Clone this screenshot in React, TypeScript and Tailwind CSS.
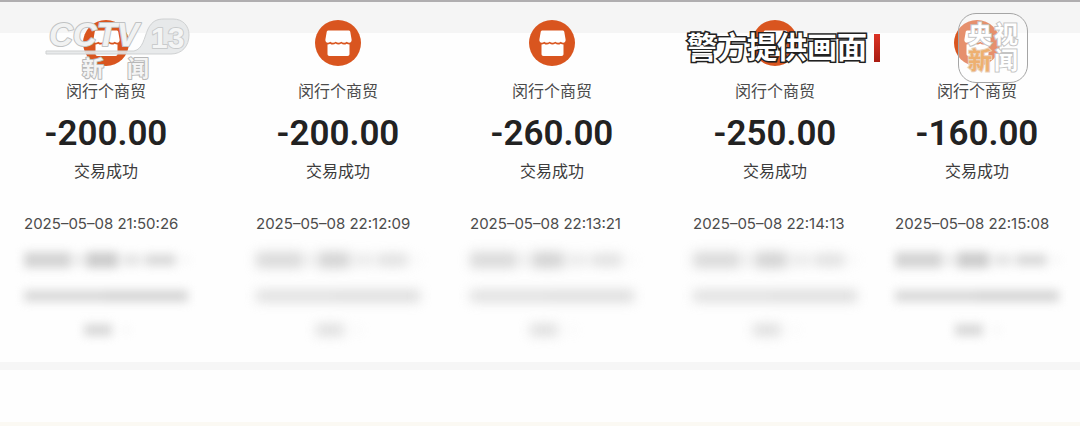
interface Bill {
  merchant: string
  amount: string
  status: string
  time: string
  faded: boolean
}

const bills: Bill[] = [
  { merchant: '闵行个商贸', amount: '-200.00', status: '交易成功', time: '2025–05–08 21:50:26', faded: false },
  { merchant: '闵行个商贸', amount: '-200.00', status: '交易成功', time: '2025–05–08 22:12:09', faded: true },
  { merchant: '闵行个商贸', amount: '-260.00', status: '交易成功', time: '2025–05–08 22:13:21', faded: true },
  { merchant: '闵行个商贸', amount: '-250.00', status: '交易成功', time: '2025–05–08 22:14:13', faded: true },
  { merchant: '闵行个商贸', amount: '-160.00', status: '交易成功', time: '2025–05–08 22:15:08', faded: false },
]

function StoreIcon() {
  return (
    <svg className="size-[46px]" viewBox="0 0 46 46" aria-hidden="true">
      <circle cx="23" cy="23" r="23" fill="#d9551f" />
      <path
        fill="#fff"
        d="M13.500 10.500h20c1 0 1.600.5 1.800 1.500l1.300 7.500c.3 2-.8 3.200-2.300 3.200-1 0-1.800-.3-2.500-.9-.8.600-1.700.9-2.700.9s-2-.3-2.800-1c-.8.700-1.800 1-2.800 1s-2-.3-2.800-1c-.8.700-1.800 1-2.800 1s-1.900-.3-2.700-.9c-.7.600-1.500.9-2.500.9-1.500 0-2.600-1.200-2.300-3.200l1.300-7.500c.2-1 .8-1.500 1.800-1.500z"
      />
      <path
        fill="#fff"
        d="M12.500 24.500c1 0 1.900-.3 2.600-.8.800.6 1.700.9 2.700.9s2-.3 2.800-1c.8.700 1.800 1 2.800 1s2-.3 2.800-1c.8.700 1.800 1 2.800 1s1.900-.3 2.700-.9c.7.500 1.600.8 2.800.8V34c0 1.300-.7 2-2 2h-18c-1.300 0-2-.7-2-2z"
      />
    </svg>
  )
}

// Redacted order details
function HiddenDetails({ faded }: { faded: boolean }) {
  return (
    <div
      className={`mt-4 flex flex-col gap-[22px] self-stretch ${faded ? 'opacity-65 blur-[6px]' : 'opacity-75 blur-[5px]'}`}
      aria-hidden="true"
    >
      <div className="flex h-4 items-center gap-1">
        <span className="h-4 w-12 bg-[#c6c6c6]" />
        <span className="h-3 w-2 bg-[#dddddd]" />
        <span className="h-4 w-8 bg-[#bcbcbc]" />
        <span className="h-3 w-5 bg-[#dddddd]" />
        <span className="h-3 w-8 bg-[#cecece]" />
        <span className="ml-1 size-1 bg-[#dddddd]" />
      </div>
      <div className="flex h-3">
        <span className="h-3 w-20 bg-[#cecece]" />
        <span className="h-3 grow bg-[#c9c9c9]" />
      </div>
      <div className="flex h-3 items-center gap-3 pl-[60px]">
        <span className="h-3 w-7 bg-[#cccccc]" />
        <span className="size-1 bg-[#dddddd]" />
      </div>
    </div>
  )
}

function BillColumn({ bill }: { bill: Bill }) {
  return (
    <article className="flex w-[164px] flex-col items-center">
      <StoreIcon />
      <h2 className="mt-[14px] text-base leading-6 text-[#4a4a4a]">{bill.merchant}</h2>
      <p className="mt-[10px] font-[Roboto] text-[35px] leading-10 font-semibold whitespace-nowrap text-[#222222]">{bill.amount}</p>
      <p className="mt-[6px] text-base leading-6 text-[#3c3c3c]">{bill.status}</p>
      <time className="mt-7 self-start font-[Inter] text-[15px] leading-6 whitespace-nowrap text-[#4c4c4c]">{bill.time}</time>
      <HiddenDetails faded={bill.faded} />
    </article>
  )
}

function ChannelLogo() {
  return (
    <svg
      className="absolute top-4 left-11 h-[66px] w-[150px]"
      viewBox="0 0 150 66"
      role="img"
      aria-label="CCTV 13 新闻"
      strokeLinejoin="round"
    >
      <path
        d="M2 35H90C99 33 100 22 104 13C108 5 113 3 120 3H129C139 3 145 10 145 19C145 30 138 38 127 38H2z"
        fill="#e6e8e9"
        fillOpacity="0.9"
        stroke="#cfd1d2"
      />
      <g fontFamily="'Liberation Sans', sans-serif" fontWeight="700" paintOrder="stroke">
        <text x="5" y="30" fontSize="33" fontStyle="italic" fill="#f1f2f2" stroke="#c0c2c3" strokeWidth="2">
          CCTV
        </text>
        <text x="107" y="32" fontSize="30" fill="#f4f5f5" stroke="#c9cbcc" strokeWidth="2">
          13
        </text>
      </g>
      <g
        fontFamily="'Noto Sans CJK SC', sans-serif"
        fontSize="22"
        fontWeight="700"
        fill="#f4f4f4"
        stroke="#b7b7b7"
        strokeWidth="2"
        paintOrder="stroke"
      >
        <text x="38" y="60">新</text>
        <text x="83" y="60">闻</text>
      </g>
    </svg>
  )
}

function Caption() {
  return (
    <div className="absolute top-7 right-[200px] flex items-center gap-[7px]">
      <p className="text-[30px] leading-10 font-bold whitespace-nowrap text-white [paint-order:stroke] [-webkit-text-stroke:3px_#222222] [text-shadow:1px_1px_1px_#222222]">
        警方提供画面
      </p>
      <span className="h-7 w-[6px] bg-linear-to-b from-[#dc3325] to-[#a91c12]" />
    </div>
  )
}

function NewsBadge() {
  return (
    <div className="absolute top-[13px] right-[52px] grid size-[70px] grid-cols-2 content-center justify-items-center rounded-[18px] border border-[#a5a5a5] bg-white/35 px-2 text-2xl leading-[26px] font-bold text-white [paint-order:stroke] [-webkit-text-stroke:2px_#c4c4c4]">
      <span>央</span>
      <span>视</span>
      <span className="text-[#eeb070] [-webkit-text-stroke:2px_#ead2bd]">新</span>
      <span>闻</span>
    </div>
  )
}

export default function App() {
  return (
    <div className="relative overflow-hidden bg-[#fefefe] font-['Liberation_Sans','Noto_Sans_CJK_SC',sans-serif]">
      <header className="h-[33px] border-t-2 border-[#b0aeb0] bg-[#f5f5f5]" />
      <main className="relative -mt-[13px] grid grid-cols-[232fr_214fr_223fr_202fr_185fr] pb-[26px] pl-6">
        {bills.map((bill) => (
          <BillColumn key={bill.time} bill={bill} />
        ))}
      </main>
      <div className="h-2 bg-[#f6f6f6]" />
      <footer className="h-14 border-b-4 border-[#fbf9f3]" />

      <ChannelLogo />
      <Caption />
      <NewsBadge />
    </div>
  )
}
